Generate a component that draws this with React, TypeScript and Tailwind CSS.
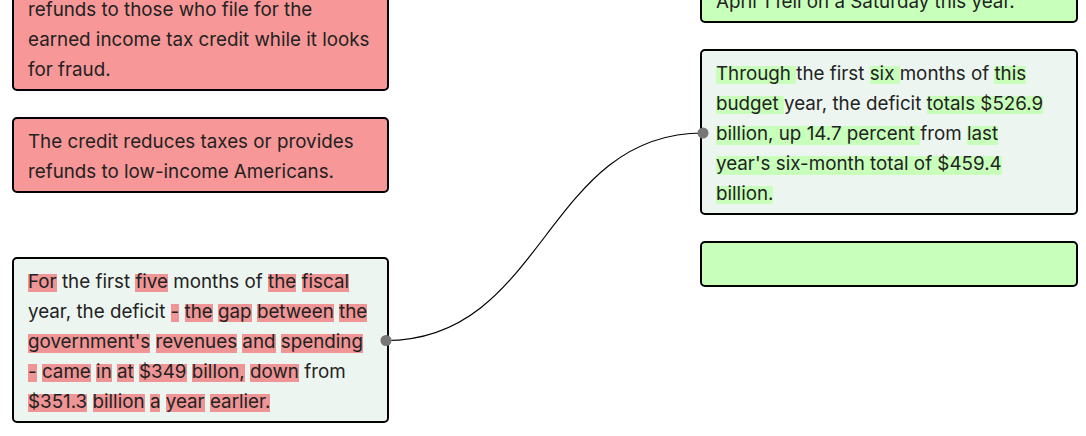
type Seg = { t: string; hl?: boolean };

const redSegs: Seg[] = [
  { t: 'For', hl: true }, { t: ' the first ' }, { t: 'five', hl: true }, { t: ' months of ' },
  { t: 'the', hl: true }, { t: ' ' }, { t: 'fiscal', hl: true }, { t: ' year, the deficit ' },
  { t: '-', hl: true }, { t: ' ' }, { t: 'the', hl: true }, { t: ' ' }, { t: 'gap', hl: true }, { t: ' ' },
  { t: 'between', hl: true }, { t: ' ' }, { t: 'the', hl: true }, { t: ' ' },
  { t: "government's", hl: true }, { t: ' ' }, { t: 'revenues', hl: true }, { t: ' ' },
  { t: 'and', hl: true }, { t: ' ' }, { t: 'spending', hl: true }, { t: ' ' }, { t: '-', hl: true }, { t: ' ' },
  { t: 'came', hl: true }, { t: ' ' }, { t: 'in', hl: true }, { t: ' ' }, { t: 'at', hl: true }, { t: ' ' },
  { t: '$349', hl: true }, { t: ' ' }, { t: 'billon,', hl: true }, { t: ' ' }, { t: 'down', hl: true },
  { t: ' from ' }, { t: '$351.3', hl: true }, { t: ' ' }, { t: 'billion', hl: true }, { t: ' ' },
  { t: 'a', hl: true }, { t: ' ' }, { t: 'year', hl: true }, { t: ' ' }, { t: 'earlier.', hl: true },
];

const greenSegs: Seg[] = [
  { t: 'Through ', hl: true }, { t: 'the first ' }, { t: 'six ', hl: true }, { t: 'months of ' },
  { t: 'this budget ', hl: true }, { t: 'year, the deficit ' },
  { t: 'totals $526.9 billion, up 14.7 percent ', hl: true }, { t: 'from ' },
  { t: "last year's six-month total of $459.4 billion.", hl: true },
];

const Card = ({ className, children }: { className: string; children?: React.ReactNode }) => (
  <div className={`min-h-[46px] rounded-[5px] border-2 border-black pl-3.5 pt-2 pb-1 ${className}`}>
    {children}
  </div>
);

const Highlighted = ({ segs, mark }: { segs: Seg[]; mark: string }) => (
  <>
    {segs.map((s, i) =>
      s.hl ? (
        <span key={i} className={mark}>{s.t}</span>
      ) : (
        <span key={i}>{s.t}</span>
      )
    )}
  </>
);

export default function App() {
  return (
    <div
      className="relative h-[436px] w-[1086px] overflow-hidden bg-white text-[18.8px] leading-[30px] text-[#222]"
      style={{ fontFamily: 'Inter, "Noto Sans", sans-serif' }}
    >
      <div className="flex gap-[311px] pl-3">
        {/* Left column */}
        <div className="-mt-[15px] flex w-[377px] flex-col gap-[26px]">
          <Card className="pr-3.5 bg-[#f79797]">
            refunds to those who file for the earned income tax credit while it looks for fraud.
          </Card>
          <Card className="pr-3.5 bg-[#f79797]">
            The credit reduces taxes or provides refunds to low-income Americans.
          </Card>
          <Card className="mt-[38px] pr-3.5 bg-[#edf5f0]">
            <Highlighted
              segs={redSegs}
              mark="bg-[linear-gradient(to_bottom,transparent_4px,#f09595_4px,#f09595_calc(100%-0.5px),transparent_calc(100%-0.5px))]"
            />
          </Card>
        </div>

        {/* Right column */}
        <div className="-mt-[23px] flex w-[378px] flex-col gap-[26px]">
          <Card className="pr-5 bg-[#c8ffbb]">April 1 fell on a Saturday this year.</Card>
          <Card className="pr-5 bg-[#edf5f0]">
            <Highlighted
              segs={greenSegs}
              mark="bg-[linear-gradient(to_bottom,transparent_4px,#c8ffbb_4px,#c8ffbb_calc(100%-0.5px),transparent_calc(100%-0.5px))]"
            />
          </Card>
          <Card className="pr-5 bg-[#c8ffbb]" />
        </div>
      </div>

      {/* Connector */}
      <svg className="pointer-events-none absolute inset-0" width="1086" height="436">
        <path d="M386 340.5 C 545 340.5, 545 133, 703 133" fill="none" stroke="#000" strokeWidth="1.2" />
        <circle cx="386" cy="340.5" r="5.5" fill="#777" />
        <circle cx="703" cy="133" r="5.5" fill="#777" />
      </svg>
    </div>
  );
}
